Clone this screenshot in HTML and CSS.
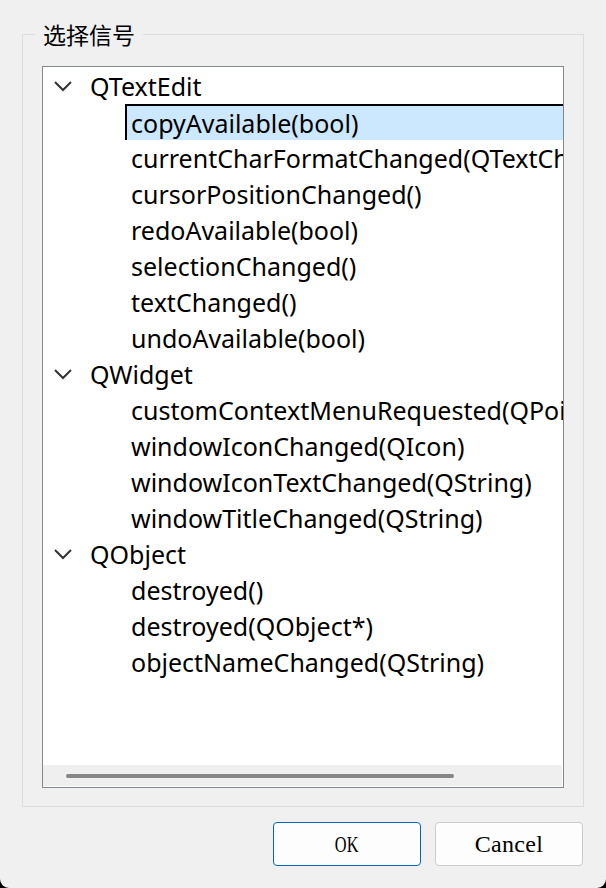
FILE: index.html
```html
<!DOCTYPE html>
<html>
<head>
<meta charset="utf-8">
<link rel="stylesheet" href="styles.css">
</head>
<body>
<div class="window">
  <fieldset class="group">
    <legend class="group-title">选择信号</legend>
    <div class="tree">
      <div class="tree-view">
        <div class="row top"><svg class="chev" width="20" height="12" viewBox="0 0 20 12"><polyline points="2,2 10,10 18,2" fill="none" stroke="#333" stroke-width="2"/></svg><span class="label">QTextEdit</span></div>
        <div class="row child"><span class="item current">copyAvailable(bool)</span></div>
        <div class="row child"><span class="item">currentCharFormatChanged(QTextCharFormat)</span></div>
        <div class="row child"><span class="item">cursorPositionChanged()</span></div>
        <div class="row child"><span class="item">redoAvailable(bool)</span></div>
        <div class="row child"><span class="item">selectionChanged()</span></div>
        <div class="row child"><span class="item">textChanged()</span></div>
        <div class="row child"><span class="item">undoAvailable(bool)</span></div>
        <div class="row top"><svg class="chev" width="20" height="12" viewBox="0 0 20 12"><polyline points="2,2 10,10 18,2" fill="none" stroke="#333" stroke-width="2"/></svg><span class="label">QWidget</span></div>
        <div class="row child"><span class="item">customContextMenuRequested(QPoint)</span></div>
        <div class="row child"><span class="item">windowIconChanged(QIcon)</span></div>
        <div class="row child"><span class="item">windowIconTextChanged(QString)</span></div>
        <div class="row child"><span class="item">windowTitleChanged(QString)</span></div>
        <div class="row top"><svg class="chev" width="20" height="12" viewBox="0 0 20 12"><polyline points="2,2 10,10 18,2" fill="none" stroke="#333" stroke-width="2"/></svg><span class="label">QObject</span></div>
        <div class="row child"><span class="item">destroyed()</span></div>
        <div class="row child"><span class="item">destroyed(QObject*)</span></div>
        <div class="row child"><span class="item">objectNameChanged(QString)</span></div>
      </div>
      <div class="hscroll"><div class="thumb"></div></div>
    </div>
  </fieldset>
  <div class="buttons">
    <button class="btn default"><span class="btn-text narrow">OK</span></button>
    <button class="btn"><span class="btn-text">Cancel</span></button>
  </div>
</div>
</body>
</html>
```
FILE: styles.css
```css
html, body {
  margin: 0;
  padding: 0;
  background: #000;
}
.window {
  width: 606px;
  height: 888px;
  background: #f0f0f0;
  border-radius: 0 0 9px 9px;
  display: flex;
  flex-direction: column;
  box-sizing: border-box;
  padding-top: 22px;
  font-family: "Noto Sans", "Noto Sans CJK SC", sans-serif;
}
.group {
  margin: 0 22px;
  padding: 0 19px 18px 19px;
  border: 1px solid #dcdcdc;
  min-width: 0;
}
.group-title {
  margin-left: -7px;
  padding: 0 8px 0 8px;
  font-family: "Noto Sans CJK SC", sans-serif;
  font-size: 23px;
  line-height: 24px;
  height: 24px;
  color: #000;
}
.tree {
  margin-top: 20px;
  height: 720px;
  border: 1px solid #828790;
  background: #fff;
  display: flex;
  flex-direction: column;
}
.tree-view {
  flex: 1;
  overflow: hidden;
  padding-top: 1px;
}
.row {
  height: 36px;
  display: flex;
  align-items: center;
  white-space: nowrap;
  font-size: 25px;
  color: #000;
}
.row.top {
  padding-left: 10px;
}
.chev {
  display: block;
  margin-right: 17px;
}
.row.child {
  padding-left: 82px;
}
.item {
  height: 36px;
  line-height: 36px;
  padding-left: 6px;
  box-sizing: border-box;
  flex: 1;
}
.item.current {
  background: #cce8ff;
  border-top: 2px solid #000;
  border-left: 2px solid #000;
  line-height: 34px;
  padding-left: 4px;
}
.hscroll {
  height: 21px;
  background: #efefef;
  border-right: 1px solid #fff;
  border-bottom: 1px solid #fff;
  display: flex;
  align-items: center;
  padding-left: 23px;
}
.thumb {
  width: 388px;
  height: 4px;
  border-radius: 2px;
  background: #868686;
}
.buttons {
  display: flex;
  justify-content: flex-end;
  gap: 14px;
  padding: 15px 23px 0 0;
}
.btn {
  width: 148px;
  height: 44px;
  box-sizing: border-box;
  border: 1px solid #cccccc;
  border-radius: 4px;
  background: #fdfdfd;
  font-family: "Liberation Serif", serif;
  font-size: 24px;
  color: #000;
  padding: 0;
  display: flex;
  align-items: center;
  justify-content: center;
}
.btn-text {
  display: inline-block;
  letter-spacing: 0.3px;
}
.btn-text.narrow {
  transform: scaleX(0.68);
}
.btn.default {
  border: 1px solid #0067c0;
}
```
